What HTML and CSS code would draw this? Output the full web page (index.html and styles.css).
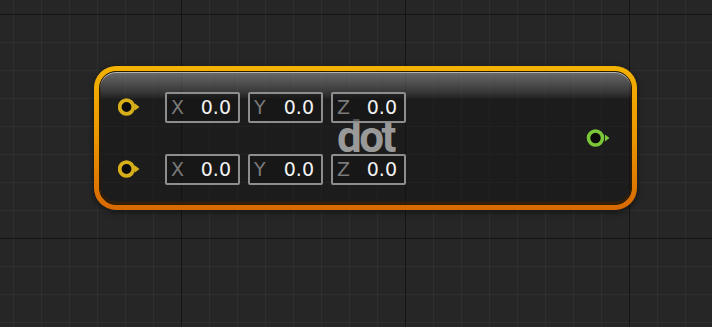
FILE: index.html
```html
<!DOCTYPE html>
<html lang="en">
<head>
<meta charset="UTF-8">
<meta name="viewport" content="width=device-width, initial-scale=1.0">
<title>dot</title>
<link rel="stylesheet" href="styles.css">
</head>
<body>

<div class="canvas">
  <div class="node">
    <div class="node-body">
      <div class="node-title">dot</div>

      <div class="inputs">
        <div class="input-row">
          <svg class="pin" viewBox="0 0 22 18" width="22" height="18">
            <circle cx="8.5" cy="9" r="6.8" fill="#0c0c0c" stroke="#d6ae1a" stroke-width="3.8"/>
            <polygon points="17,5.5 21.5,9 17,12.5" fill="#d6ae1a"/>
          </svg>
          <div class="vector">
            <div class="field"><span class="axis">X</span><span class="value">0.0</span></div>
            <div class="field"><span class="axis">Y</span><span class="value">0.0</span></div>
            <div class="field"><span class="axis">Z</span><span class="value">0.0</span></div>
          </div>
        </div>
        <div class="input-row">
          <svg class="pin" viewBox="0 0 22 18" width="22" height="18">
            <circle cx="8.5" cy="9" r="6.8" fill="#0c0c0c" stroke="#d6ae1a" stroke-width="3.8"/>
            <polygon points="17,5.5 21.5,9 17,12.5" fill="#d6ae1a"/>
          </svg>
          <div class="vector">
            <div class="field"><span class="axis">X</span><span class="value">0.0</span></div>
            <div class="field"><span class="axis">Y</span><span class="value">0.0</span></div>
            <div class="field"><span class="axis">Z</span><span class="value">0.0</span></div>
          </div>
        </div>
      </div>

      <svg class="pin" viewBox="0 0 24 20" width="24" height="20">
        <circle cx="9.5" cy="10" r="7" fill="#0c0c0c" stroke="#7cc63a" stroke-width="3.6"/>
        <polygon points="19,6.5 23.5,10 19,13.5" fill="#7cc63a"/>
      </svg>
    </div>
  </div>
</div>

</body>
</html>
```

FILE: styles.css
```css
html, body {
  margin: 0;
  height: 100%;
}
body {
  font-family: "DejaVu Sans", sans-serif;
  background-color: #262626;
  background-image:
    linear-gradient(to right, #141414 1px, transparent 1px),
    linear-gradient(to bottom, #141414 1px, transparent 1px),
    linear-gradient(to right, #2f2f2f 1px, transparent 1px),
    linear-gradient(to bottom, #2f2f2f 1px, transparent 1px);
  background-size: 224px 100%, 100% 224px, 28px 100%, 100% 28px;
  background-position: 181px 0, 0 14px, 13px 0, 0 14px;
}
.canvas {
  position: relative;
  width: 712px;
  height: 327px;
}
.node {
  position: absolute;
  left: 94px;
  top: 66px;
  width: 543px;
  height: 144px;
  box-sizing: border-box;
  padding: 5px 5px 5px 5px;
  border-radius: 22px;
  background: linear-gradient(to bottom, #f3b200, #ea9600 50%, #d86800);
  box-shadow: 0 2px 6px rgba(0, 0, 0, 0.55);
}
.node-body {
  position: relative;
  height: 100%;
  box-sizing: border-box;
  border: 1px solid #2a1c00;
  border-radius: 17px;
  padding: 19px 21px 19px 18px;
  display: flex;
  align-items: center;
  /* header sheen, dark tint, then the canvas grid pinned to the viewport */
  background-color: #262626;
  background-image:
    linear-gradient(to bottom, rgba(255, 255, 255, 0.34), rgba(255, 255, 255, 0.13) 75%, rgba(255, 255, 255, 0.03)),
    linear-gradient(rgba(16, 16, 16, 0.45), rgba(16, 16, 16, 0.45)),
    linear-gradient(to right, #141414 1px, transparent 1px),
    linear-gradient(to bottom, #141414 1px, transparent 1px),
    linear-gradient(to right, #2f2f2f 1px, transparent 1px),
    linear-gradient(to bottom, #2f2f2f 1px, transparent 1px);
  background-size: 100% 26px, 100% 100%, 224px 100%, 100% 224px, 28px 100%, 100% 28px;
  background-position: 0 0, 0 0, 181px 0, 0 14px, 13px 0, 0 14px;
  background-repeat: no-repeat, no-repeat, repeat, repeat, repeat, repeat;
  background-attachment: scroll, scroll, fixed, fixed, fixed, fixed;
  box-shadow: inset 0 1px 0 rgba(255, 255, 255, 0.5), inset 0 -2px 2px rgba(70, 35, 0, 0.8);
}
.node-title {
  position: absolute;
  left: 0;
  right: 0;
  top: 50%;
  transform: translateY(-52%);
  text-align: center;
  font-family: Roboto, sans-serif;
  font-weight: 700;
  font-size: 44px;
  letter-spacing: -2.5px;
  color: #999999;
  pointer-events: none;
}
.inputs {
  position: relative;
  flex: 1;
  display: flex;
  flex-direction: column;
  gap: 31px;
}
.input-row {
  display: flex;
  align-items: center;
}
.pin {
  display: block;
  flex: none;
}
.vector {
  display: flex;
  gap: 8px;
  margin-left: 25px;
}
.field {
  width: 75px;
  height: 31px;
  box-sizing: border-box;
  border: 2px solid #8e8e8e;
  border-radius: 2px;
  background: rgba(18, 18, 18, 0.5);
  display: flex;
  align-items: center;
  justify-content: space-between;
  padding: 0 7px 0 4px;
  font-size: 19px;
}
.axis {
  color: #7a7a7a;
}
.value {
  color: #f2f2f2;
}
```
